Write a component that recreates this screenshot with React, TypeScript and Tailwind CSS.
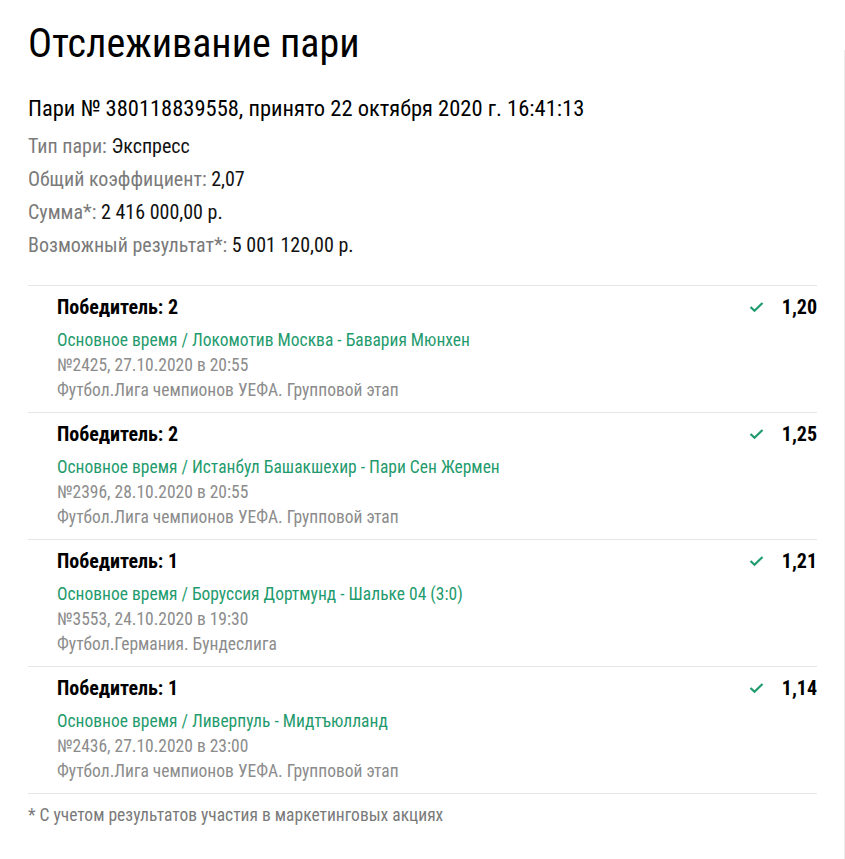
const bets = [
  {
    outcome: "Победитель: 2",
    event: "Основное время / Локомотив Москва - Бавария Мюнхен",
    meta: "№2425, 27.10.2020 в 20:55",
    league: "Футбол.Лига чемпионов УЕФА. Групповой этап",
    coef: "1,20",
  },
  {
    outcome: "Победитель: 2",
    event: "Основное время / Истанбул Башакшехир - Пари Сен Жермен",
    meta: "№2396, 28.10.2020 в 20:55",
    league: "Футбол.Лига чемпионов УЕФА. Групповой этап",
    coef: "1,25",
  },
  {
    outcome: "Победитель: 1",
    event: "Основное время / Боруссия Дортмунд - Шальке 04 (3:0)",
    meta: "№3553, 24.10.2020 в 19:30",
    league: "Футбол.Германия. Бундеслига",
    coef: "1,21",
  },
  {
    outcome: "Победитель: 1",
    event: "Основное время / Ливерпуль - Мидтъюлланд",
    meta: "№2436, 27.10.2020 в 23:00",
    league: "Футбол.Лига чемпионов УЕФА. Групповой этап",
    coef: "1,14",
  },
];

function Check() {
  return (
    <svg width="15" height="12" viewBox="0 0 15 12" fill="none" aria-hidden="true">
      <path d="M1.5 6 L5.5 9.8 L13.5 2" stroke="#1f9b6e" strokeWidth="2.2" />
    </svg>
  );
}

function BetRow({ bet }: { bet: (typeof bets)[number] }) {
  return (
    <div className="flex border-b border-[#e6e6e6] pl-[29px] pt-[11px] pb-[9px]">
      <div className="flex-1">
        <div className="text-[20px] font-bold leading-[20px] text-black">{bet.outcome}</div>
        <div className="mt-[11px] text-[17.5px] leading-[25px] text-[#1f9b6e]">{bet.event}</div>
        <div className="text-[17.5px] leading-[25px] text-[#8c8c8c]">{bet.meta}</div>
        <div className="text-[17.5px] leading-[25px] text-[#8c8c8c]">{bet.league}</div>
      </div>
      <div className="flex h-[20px] items-center gap-[18px]">
        <Check />
        <span className="text-[20px] font-bold leading-[20px] text-black">{bet.coef}</span>
      </div>
    </div>
  );
}

export default function App() {
  return (
    <div
      className="relative min-h-[859px] bg-white pl-[28px] pr-[28px] pt-[22px] text-[#111] [font-stretch:condensed]"
      style={{ fontFamily: "Roboto, 'Noto Sans', sans-serif" }}
    >
      <div className="absolute right-0 top-[50px] bottom-0 w-px bg-[#ececec]" />
      <h1 className="text-[40px] leading-[44px] font-normal text-black">Отслеживание пари</h1>
      <div className="mt-[28px] text-[22.5px] leading-[28px] text-black">
        Пари № 380118839558, принято 22 октября 2020 г. 16:41:13
      </div>
      <div className="mt-[8px] flex flex-col text-[20px] leading-[33px]">
        <div>
          <span className="text-[#7a7a7a]">Тип пари: </span>Экспресс
        </div>
        <div>
          <span className="text-[#7a7a7a]">Общий коэффициент: </span>2,07
        </div>
        <div>
          <span className="text-[#7a7a7a]">Сумма*: </span>2 416 000,00 р.
        </div>
        <div>
          <span className="text-[#7a7a7a]">Возможный результат*: </span>5 001 120,00 р.
        </div>
      </div>
      <div className="mt-[23px] border-t border-[#e6e6e6]">
        {bets.map((b, i) => (
          <BetRow key={i} bet={b} />
        ))}
      </div>
      <div className="mt-[9px] text-[17.5px] leading-[24px] text-[#7a7a7a]">
        * С учетом результатов участия в маркетинговых акциях
      </div>
    </div>
  );
}
